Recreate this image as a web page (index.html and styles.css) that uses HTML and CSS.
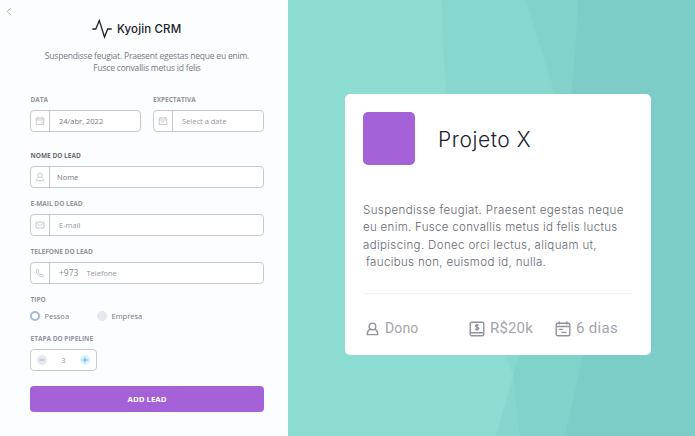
FILE: index.html
```html
<!DOCTYPE html>
<html lang="pt-BR">
<head>
<meta charset="utf-8">
<title>Kyojin CRM</title>
<link rel="stylesheet" href="styles.css">
</head>
<body>
<div class="page">
  <main class="form-pane">
    <svg class="back" viewBox="0 0 6 8"><path d="M4.7 .8 1.3 4l3.4 3.2"/></svg>
    <header class="brand">
      <svg class="pulse" viewBox="0 0 20 20"><path d="M.3 10h3.5L7.3 1.5l5.2 16.5 3.2-8h4"/></svg>
      <h1>Kyojin CRM</h1>
    </header>
    <p class="intro">Suspendisse feugiat. Praesent egestas neque eu enim.<br>Fusce convallis metus id felis</p>

    <form class="fields">
      <div class="dates">
        <div class="field">
          <label>DATA</label>
          <div class="input"><span class="icon"><svg viewBox="0 0 10 10"><path d="M1.2 2h7.6v6.5H1.2zM1.2 4h7.6M3 1v1.5M7 1v1.5M6 6.5h2"/></svg></span><span class="value">24/abr, 2022</span></div>
        </div>
        <div class="field">
          <label class="l-exp">EXPECTATIVA</label>
          <div class="input"><span class="icon"><svg viewBox="0 0 10 10"><path d="M1.2 2h7.6v6.5H1.2zM1.2 4h7.6M3 1v1.5M7 1v1.5M3 6h3"/></svg></span><span class="value muted">Select a date</span></div>
        </div>
      </div>
      <div class="field">
        <label class="strong">NOME DO LEAD</label>
        <div class="input blue"><span class="icon"><svg viewBox="0 0 10 10"><circle cx="5" cy="3.2" r="2.2"/><path d="M3.8 5.2C2 6 1.2 7 1.2 8.7h7.6C8.8 7 8 6 6.2 5.2"/></svg></span><span class="value v-nome">Nome</span></div>
      </div>
      <div class="field">
        <label>E-MAIL DO LEAD</label>
        <div class="input"><span class="icon"><svg viewBox="0 0 10 10"><rect x="1" y="2" width="8" height="6" rx="1"/><path d="m1.3 3 3.7 2.6L8.7 3"/></svg></span><span class="value muted">E-mail</span></div>
      </div>
      <div class="field">
        <label>TELEFONE DO LEAD</label>
        <div class="input"><span class="icon"><svg viewBox="0 0 10 10"><path d="M2.5 1 1 2.4C1.3 6 4 8.7 7.6 9L9 7.5 7.2 6 6 6.8C4.8 6.2 3.8 5.2 3.2 4L4 2.8z"/></svg></span><span class="value prefix">+973</span><span class="value muted v-tel">Telefone</span></div>
      </div>
      <div class="field kind">
        <label>TIPO</label>
        <div class="radios">
          <span class="radio"><i class="dot on"></i><span>Pessoa</span></span>
          <span class="radio"><i class="dot"></i><span>Empresa</span></span>
        </div>
      </div>
      <div class="field stage">
        <label>ETAPA DO PIPELINE</label>
        <div class="stepper">
          <svg class="minus" viewBox="0 0 10 10"><circle cx="5" cy="5" r="5"/><path d="M2.5 5h5"/></svg>
          <span>3</span>
          <svg class="plus" viewBox="0 0 10 10"><circle cx="5" cy="5" r="5"/><path d="M2.2 5h5.6M5 2.2v5.6"/></svg>
        </div>
      </div>
      <button type="button">ADD LEAD</button>
    </form>
  </main>

  <section class="preview">
    <svg class="waves" viewBox="0 0 407 436" preserveAspectRatio="none">
      <path d="M154 0C154 130 184 270 225 375L232 436H407V0z"/>
      <path class="second" d="M238 0 267 94C296 190 309 285 295 355L277 436H407V0z"/>
      <path class="third" d="M290 0C285 120 270 225 231 355L208 436H407V0z"/>
    </svg>
    <article class="card">
      <div class="card-head"><div class="swatch"></div><h2>Projeto X</h2></div>
      <p class="about"><span class="a1">Suspendisse feugiat. Praesent egestas neque</span><span class="a2">eu enim. Fusce convallis metus id felis luctus</span><span class="a3">adipiscing. Donec orci lectus, aliquam ut,</span><span class="a4">faucibus non, euismod id, nulla.</span></p>
      <footer class="facts">
        <span class="fact owner"><svg viewBox="0 0 16 16"><circle cx="7.5" cy="5.4" r="3.3"/><path d="M5.4 8c-2 .9-3.1 2.7-3.1 5.6h10.4c0-2.9-1.1-4.7-3.1-5.6"/></svg><span>Dono</span></span>
        <span class="fact"><svg viewBox="0 0 16 16"><rect x="1.2" y="1.2" width="13.6" height="13.6" rx="1.5"/><path d="M1.5 11.7h13M9.8 4.4C9.2 3.7 6.4 3.5 6.4 5s3.4.9 3.4 2.4-2.9 1.4-3.6.5M8 2.7v7"/></svg><span>R$20k</span></span>
        <span class="fact days"><svg viewBox="0 0 16 16"><rect x="1.2" y="2.2" width="13.6" height="12.6" rx="1.5"/><path d="M1.5 5.5h13M4.2.6v3M11.8.6v3M3.8 8.4h4M6.5 11.4h5"/></svg><span>6 dias</span></span>
      </footer>
    </article>
  </section>
</div>
</body>
</html>
```
FILE: styles.css
```css
* { box-sizing: border-box; }
body { margin: 0; font-family: "Open Sans", "Noto Sans", sans-serif; }
svg { display: block; fill: none; }
h1, h2, p { margin: 0; font-weight: 400; }
.page { display: flex; width: 695px; height: 436px; overflow: hidden; }

.form-pane { position: relative; width: 288px; padding: 19px 24px 0 30px; background: #fcfdfe; flex: none; }
.back { position: absolute; left: 6px; top: 7px; width: 6px; height: 9px; stroke: #a9adb5; stroke-width: .9; }
.brand { display: flex; align-items: center; height: 20px; padding-left: 62px; gap: 5px; }
.pulse { width: 20px; height: 20px; stroke: #20222b; stroke-width: 1.3; }
.brand h1 { font: 500 11.5px/20px Inter, sans-serif; letter-spacing: .13px; color: #20222b; white-space: nowrap; }
.intro { margin-top: 11px; font-size: 8.5px; line-height: 12px; letter-spacing: -.2px; text-align: center; color: #747985; white-space: nowrap; }

.fields { margin-top: 19px; }
.dates { display: grid; grid-template-columns: 111px 111px; gap: 12px; margin-bottom: 17px; }
.field { margin-bottom: 9px; }
.dates .field { margin-bottom: 0; }
.field label { display: block; width: max-content; height: 17px; padding: 1px 0 0 .5px; font-size: 6.5px; line-height: 12px; font-weight: 700; color: #8f95a1; white-space: nowrap; }
.field label.strong { color: #666d7c; }
.field label.l-exp { padding-left: 0; }
.input { display: flex; align-items: center; height: 22px; border: 1px solid #c4c9d1; border-radius: 4px; background: #fff; }
.input.blue { border-color: #bccbd7; }
.icon { display: flex; align-items: center; justify-content: center; width: 19px; height: 20px; border-right: 1px solid #c4c9d1; flex: none; }
.blue .icon { border-color: #bccbd7; }
.icon svg { width: 10px; height: 10px; stroke: #b0b5c0; stroke-width: .7; }
.value { margin-left: 9px; font-size: 7.5px; line-height: 20px; color: #717783; white-space: nowrap; }
.v-nome { margin-left: 7px; }
.muted { color: #9298a4; }
.prefix { font-size: 8.5px; color: #858b98; }
.v-tel { margin-left: 8px; }
.field.kind { margin-bottom: 6px; }
.kind label { height: 12px; }
.radios { display: flex; height: 21px; align-items: center; font-size: 7.5px; color: #747b88; }
.radio { display: flex; align-items: center; gap: 4.5px; width: 67px; }
.dot { width: 10px; height: 10px; border-radius: 50%; background: #e6e8f0; flex: none; }
.dot.on { border: 2px solid #a3bad4; background: #fff; }
.stepper { display: flex; align-items: center; justify-content: space-between; width: 67px; height: 22px; border: 1px solid #c4c9d1; border-radius: 4px; background: #fff; padding: 0 6px; font-size: 7.5px; color: #8d939f; }
.stepper svg { width: 10px; height: 10px; stroke-width: .9; }
.minus circle { fill: #e6e8f0; stroke: none; }
.minus path { stroke: #a0a5b2; }
.plus circle { fill: #def1fc; stroke: none; }
.plus path { stroke: #53b2e2; }
.field.stage { margin-bottom: 15px; }
button { display: block; width: 234px; height: 26px; border: 0; padding: 0; border-radius: 4px; background: #a461d8; color: #fff; font: 700 7.8px/26px "Open Sans", sans-serif; }

.preview { position: relative; width: 407px; background: #8cdcd2; padding: 94px 0 0 57px; }
.waves { position: absolute; inset: 0; width: 407px; height: 436px; }
.waves path { fill: #5bb5ac; fill-opacity: .1; }
.waves .second { fill: #57a9ad; fill-opacity: .11; }
.waves .third { fill: #57a9ad; fill-opacity: .1; }
.card { position: relative; width: 306px; height: 261px; border-radius: 5px; background: #fff; padding: 18px 18px 0; }
.card-head { display: flex; align-items: center; gap: 23px; height: 53px; }
.swatch { width: 52px; height: 53px; border-radius: 5px; background: #a461d8; }
h2 { font: 300 21px/30px Inter, sans-serif; letter-spacing: .55px; color: #20222b; white-space: nowrap; padding-top: 2px; }
.about { margin-top: 36px; padding-top: 1px; height: 93px; border-bottom: 1px solid #f0f1f3; font: 300 11.5px/17.3px Inter, sans-serif; color: #656872; }
.about span { display: block; width: max-content; white-space: nowrap; }
.a1 { letter-spacing: .39px; }
.a2 { letter-spacing: .31px; }
.a3 { letter-spacing: .36px; }
.about .a4 { margin-left: 3px; letter-spacing: .34px; }
.facts { display: grid; grid-template-columns: 104px 86px 1fr; margin-top: 25px; padding-left: 2px; }
.fact { display: flex; align-items: center; gap: 5px; height: 19px; font: 400 15px/19px Roboto, sans-serif; letter-spacing: .15px; color: #a3a4ac; white-space: nowrap; }
.owner { gap: 4px; font-size: 14px; }
.days { letter-spacing: .3px; }
.fact svg { width: 16px; height: 16px; stroke: #92939d; stroke-width: 1.4; flex: none; }
```
